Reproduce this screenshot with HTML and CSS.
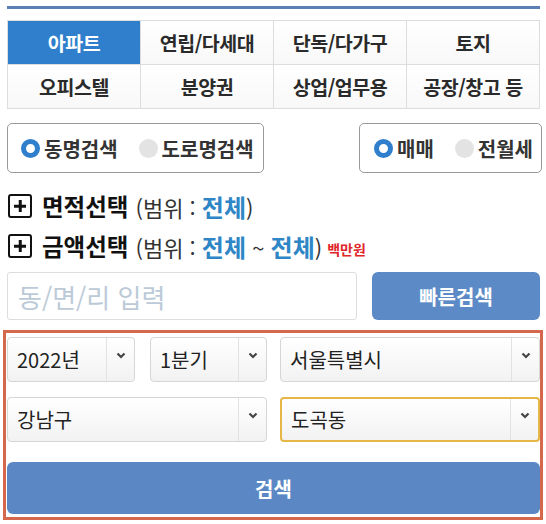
FILE: index.html
```html
<!DOCTYPE html>
<html lang="ko">
<head>
  <meta charset="UTF-8">
  <meta name="viewport" content="width=device-width, initial-scale=1.0">
  <title>실거래가 검색</title>
  <link rel="stylesheet" href="styles.css">
</head>
<body>
  <div class="page">
    <div class="top-line"></div>

    <div class="type-grid">
      <div class="type-cell active">아파트</div>
      <div class="type-cell">연립/다세대</div>
      <div class="type-cell">단독/다가구</div>
      <div class="type-cell">토지</div>
      <div class="type-cell">오피스텔</div>
      <div class="type-cell">분양권</div>
      <div class="type-cell">상업/업무용</div>
      <div class="type-cell">공장/창고 등</div>
    </div>

    <div class="radio-row">
      <div class="radio-box box-left">
        <span class="radio on"></span><span class="radio-label">동명검색</span>
        <span class="radio off"></span><span class="radio-label">도로명검색</span>
      </div>
      <div class="radio-box box-right">
        <span class="radio on"></span><span class="radio-label">매매</span>
        <span class="radio off"></span><span class="radio-label">전월세</span>
      </div>
    </div>

    <div class="range-row">
      <span class="plus-box"></span>
      <span class="range-title">면적선택</span>
      <span class="range-text">(범위 : <b class="blue">전체</b>)</span>
    </div>
    <div class="range-row">
      <span class="plus-box"></span>
      <span class="range-title">금액선택</span>
      <span class="range-text">(범위 : <b class="blue">전체</b> ~ <b class="blue">전체</b>)</span>
      <span class="unit">백만원</span>
    </div>

    <div class="quick-row">
      <div class="quick-input">동/면/리 입력</div>
      <button class="quick-btn">빠른검색</button>
    </div>

    <div class="search-box">
      <div class="select-row">
        <div class="half">
          <div class="select sel-year"><span class="sel-value">2022년</span><span class="sel-arrow"><svg width="10" height="7" viewBox="0 0 10 7"><path d="M1.5 1.5 L5 5 L8.5 1.5" fill="none" stroke="#444" stroke-width="2.2"/></svg></span></div>
          <div class="select sel-quarter"><span class="sel-value">1분기</span><span class="sel-arrow"><svg width="10" height="7" viewBox="0 0 10 7"><path d="M1.5 1.5 L5 5 L8.5 1.5" fill="none" stroke="#444" stroke-width="2.2"/></svg></span></div>
        </div>
        <div class="half">
          <div class="select"><span class="sel-value">서울특별시</span><span class="sel-arrow"><svg width="10" height="7" viewBox="0 0 10 7"><path d="M1.5 1.5 L5 5 L8.5 1.5" fill="none" stroke="#444" stroke-width="2.2"/></svg></span></div>
        </div>
      </div>
      <div class="select-row">
        <div class="half">
          <div class="select"><span class="sel-value">강남구</span><span class="sel-arrow"><svg width="10" height="7" viewBox="0 0 10 7"><path d="M1.5 1.5 L5 5 L8.5 1.5" fill="none" stroke="#444" stroke-width="2.2"/></svg></span></div>
        </div>
        <div class="half">
          <div class="select focused"><span class="sel-value">도곡동</span><span class="sel-arrow"><svg width="10" height="7" viewBox="0 0 10 7"><path d="M1.5 1.5 L5 5 L8.5 1.5" fill="none" stroke="#444" stroke-width="2.2"/></svg></span></div>
        </div>
      </div>
      <button class="search-btn">검색</button>
    </div>
  </div>
</body>
</html>
```

FILE: styles.css
```css
body {
  margin: 0;
  padding: 0;
  background-color: #fff;
  font-family: "Noto Sans CJK KR", "Noto Sans", sans-serif;
  color: #222;
}

.page {
  width: 546px;
  padding: 6px 6px 0 7px;
  box-sizing: border-box;
}

.top-line {
  height: 3px;
  background-color: #5a7fb3;
}

/* 매물 종류 탭 */
.type-grid {
  display: grid;
  grid-template-columns: repeat(4, 1fr);
  margin-top: 11px;
  border-top: 1px solid #ddd;
  border-left: 1px solid #ddd;
}

.type-cell {
  height: 43px;
  display: flex;
  align-items: center;
  justify-content: center;
  border-right: 1px solid #ddd;
  border-bottom: 1px solid #ddd;
  background: linear-gradient(#fff, #f8f8f8);
  font-size: 19.5px;
  font-weight: 700;
  color: #2a2a2a;
  letter-spacing: -0.5px;
}

.type-cell.active {
  background: #2f7fcc;
  color: #fff;
}

/* 라디오 */
.radio-row {
  display: flex;
  justify-content: space-between;
  margin-top: 14px;
  margin-right: -2px;
}

.radio-box {
  height: 50px;
  box-sizing: border-box;
  border: 1px solid #999;
  border-radius: 5px;
  display: flex;
  align-items: center;
  font-size: 20px;
  font-weight: 700;
  color: #333;
  white-space: nowrap;
}

.box-left {
  width: 257px;
  padding-left: 13px;
}

.box-right {
  width: 183px;
  padding-left: 14px;
}

.radio {
  width: 19px;
  height: 19px;
  border-radius: 50%;
  box-sizing: border-box;
  flex-shrink: 0;
}

.radio.on {
  border: 5px solid #2f7fcc;
  background: #fff;
}

.radio.off {
  background: #e3e3e3;
}

.radio-label {
  flex-shrink: 0;
  margin-left: 4px;
  margin-right: 21px;
}

.radio-label:last-child {
  margin-right: 0;
}

/* 범위 선택 */
.range-row {
  display: flex;
  align-items: center;
  height: 40px;
  white-space: nowrap;
}

.radio-row + .range-row {
  margin-top: 13px;
}

.plus-box {
  width: 24px;
  height: 24px;
  box-sizing: border-box;
  border: 2.5px solid #111;
  border-radius: 3px;
  margin-left: 1px;
  margin-right: 10px;
  position: relative;
}

.plus-box::before,
.plus-box::after {
  content: "";
  position: absolute;
  background: #111;
  left: 50%;
  top: 50%;
  transform: translate(-50%, -50%);
}

.plus-box::before {
  width: 12px;
  height: 2.5px;
}

.plus-box::after {
  width: 2.5px;
  height: 12px;
}

.range-title {
  font-size: 23.5px;
  font-weight: 700;
  color: #111;
  margin-right: 7px;
}

.range-text {
  font-size: 22px;
  color: #333;
}

.blue {
  color: #2e86c6;
  font-size: 24px;
}

.unit {
  color: #e0252b;
  font-size: 14px;
  font-weight: 700;
  margin-left: 5px;
  margin-top: 5px;
}

/* 빠른검색 */
.quick-row {
  display: flex;
  gap: 15px;
  margin-top: 6px;
}

.quick-input {
  width: 350px;
  height: 48px;
  box-sizing: border-box;
  border: 1px solid #ddd;
  border-radius: 3px;
  padding-left: 10px;
  display: flex;
  align-items: center;
  font-size: 26px;
  color: #bccad8;
}

.quick-btn {
  width: 168px;
  height: 48px;
  border: none;
  border-radius: 6px;
  background: #5b8ac6;
  color: #fff;
  font-family: inherit;
  font-size: 20px;
  font-weight: 700;
}

/* 상세검색 */
.search-box {
  margin: 10px -3px 0 -4px;
  border: 3px solid #d5674c;
  padding: 4px 0 3px 1px;
  width: 540px;
  box-sizing: border-box;
}

.select-row {
  display: flex;
  gap: 13px;
  margin-bottom: 15px;
}

.select-row + .select-row {
  margin-bottom: 20px;
}

.half {
  width: 260px;
  display: flex;
  gap: 15px;
}

.select {
  flex: 1;
  height: 45px;
  box-sizing: border-box;
  border: 1px solid #d6d6d6;
  border-radius: 4px;
  background: linear-gradient(#fff, #f2f2f2);
  display: flex;
  align-items: center;
  font-size: 20px;
  color: #222;
}

.sel-year {
  flex: 0 0 128px;
}

.select.focused {
  border: 2px solid #e6b646;
}

.sel-value {
  flex: 1;
  padding-left: 9px;
}

.sel-arrow {
  width: 28px;
  height: 100%;
  border-left: 1px solid #e2e2e2;
  display: flex;
  align-items: center;
  justify-content: center;
  padding-bottom: 8px;
  box-sizing: border-box;
}

.search-btn {
  display: block;
  width: 533px;
  height: 52px;
  border: none;
  border-radius: 6px;
  background: #5b88c5;
  color: #fff;
  font-family: inherit;
  font-size: 20px;
  font-weight: 700;
}
```
